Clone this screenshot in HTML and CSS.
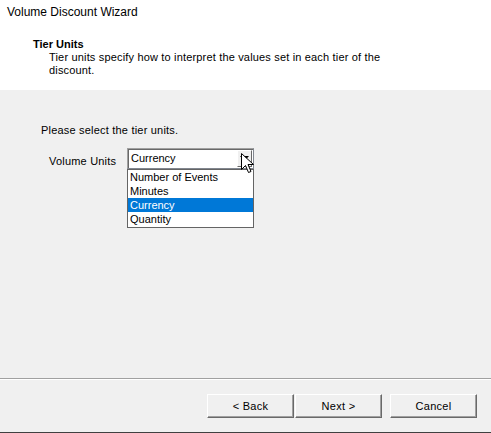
FILE: index.html
```html
<!DOCTYPE html>
<html>
<head>
<meta charset="utf-8">
<link rel="stylesheet" href="styles.css">
</head>
<body>
<div class="win">
  <div class="header">
    <div class="title">Volume Discount Wizard</div>
    <div class="step-title">Tier Units</div>
    <div class="step-desc">Tier units specify how to interpret the values set in each tier of the discount.</div>
  </div>
  <div class="main">
    <div class="prompt">Please select the tier units.</div>
    <div class="field">
      <span class="label">Volume Units</span>
      <div class="combo-wrap">
        <div class="combo">
          <span class="combo-text">Currency</span>
          <span class="combo-btn"><svg width="9" height="6" viewBox="0 0 9 6"><path d="M0 0H9L4.5 5Z" fill="#000"/></svg></span>
        </div>
        <ul class="list">
          <li>Number of Events</li>
          <li>Minutes</li>
          <li class="sel">Currency</li>
          <li>Quantity</li>
        </ul>
        <svg class="cursor" width="13" height="21" viewBox="0 0 13 21"><path d="M0.5 0.5V16.5L4.5 12.5L7.5 19.5L10 18.5L7 11.5H12.5Z" fill="#fff" stroke="#000" stroke-width="1" stroke-linejoin="miter"/></svg>
      </div>
    </div>
  </div>
  <div class="sep"></div>
  <div class="footer">
    <div class="btn-pair">
      <button class="btn">&lt; Back</button>
      <button class="btn">Next &gt;</button>
    </div>
    <button class="btn">Cancel</button>
  </div>
</div>
</body>
</html>
```
FILE: styles.css
```css
* { box-sizing: border-box; }
html, body { margin: 0; padding: 0; }
body {
  width: 491px;
  height: 433px;
  overflow: hidden;
  font-family: "Liberation Sans", Arial, sans-serif;
  font-size: 11px;
  color: #000;
  background: #f0f0f0;
}
.win {
  display: flex;
  flex-direction: column;
  height: 433px;
  border-bottom: 1px solid #404040;
}
.header {
  height: 90px;
  background: #fff;
  padding: 5px 0 0 7px;
}
.title {
  font-size: 12px;
  line-height: 14px;
}
.step-title {
  margin: 19px 0 0 26px;
  font-weight: bold;
  line-height: 13px;
}
.step-desc {
  margin-left: 42px;
  width: 340px;
  line-height: 13px;
  letter-spacing: 0.17px;
}
.main {
  flex: 1;
  padding: 34px 0 0 41px;
  position: relative;
}
.prompt {
  letter-spacing: 0.2px;
  line-height: 13px;
}
.field {
  display: flex;
  align-items: flex-start;
  margin-top: 11px;
}
.label {
  margin: 7px 0 0 8px;
  width: 78px;
  letter-spacing: 0.2px;
  line-height: 13px;
}
.combo-wrap {
  position: relative;
  width: 127px;
}
.combo {
  height: 21px;
  background: #fff;
  border: 1px solid #828790;
  border-top-color: #a0a0a0;
  border-left-color: #a0a0a0;
  box-shadow: inset 1px 1px 0 #696969;
  display: flex;
  align-items: center;
  padding-left: 3px;
}
.combo-text {
  flex: 1;
  line-height: 13px;
}
.combo-btn {
  width: 15px;
  height: 17px;
  margin-right: 1px;
  background: #f0f0f0;
  border: 1px solid #fff;
  border-right-color: #696969;
  border-bottom-color: #696969;
  display: flex;
  align-items: center;
  justify-content: center;
}
.list {
  position: absolute;
  left: 0;
  top: 21px;
  width: 127px;
  margin: 0;
  padding: 0 0 1px 0;
  list-style: none;
  background: #fff;
  border: 1px solid #646464;
}
.list li {
  height: 14px;
  line-height: 14px;
  padding-left: 2px;
}
.list li.sel {
  background: #0078d7;
  color: #fff;
}
.cursor {
  position: absolute;
  left: 114px;
  top: 5px;
}
.sep {
  height: 2px;
  border-top: 1px solid #a0a0a0;
  border-bottom: 1px solid #fff;
}
.footer {
  height: 52px;
  display: flex;
  align-items: flex-start;
  padding: 14px 0 0 207px;
  gap: 8px;
}
.btn-pair {
  display: flex;
  gap: 1px;
}
.btn {
  width: 87px;
  height: 24px;
  margin: 0;
  padding: 0;
  font-family: "Liberation Sans", Arial, sans-serif;
  font-size: 11px;
  letter-spacing: 0.3px;
  color: #000;
  background: #f0f0f0;
  border: 1px solid #fff;
  border-right-color: #696969;
  border-bottom-color: #696969;
  box-shadow: inset -1px -1px 0 #a0a0a0;
}
```
